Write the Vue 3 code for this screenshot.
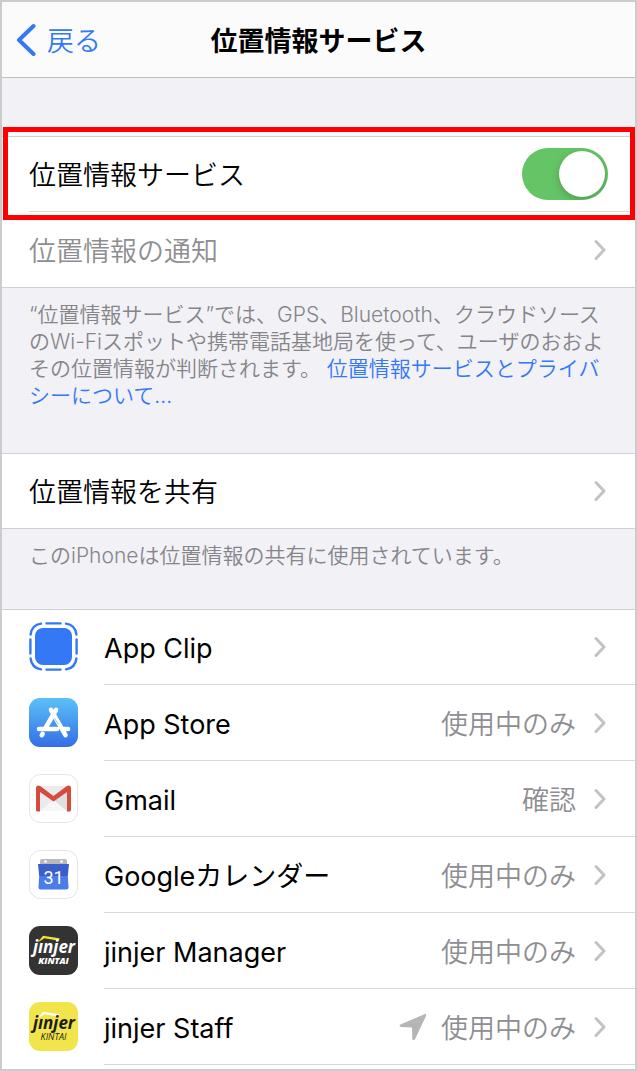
<template>
  <div class="screen">
    <header class="navbar">
      <button type="button" class="back">
        <svg class="back-icon" viewBox="0 0 20 34" aria-hidden="true">
          <path d="M17.5 3 L3 17 L17.5 31" />
        </svg>
        <span class="back-text">戻る</span>
      </button>
      <h1 class="title">位置情報サービス</h1>
    </header>

    <main class="content">
      <section class="group">
        <div class="row">
          <div class="row-body">
            <label class="label" for="location-switch">位置情報サービス</label>
            <input id="location-switch" v-model="enabled" class="switch" type="checkbox" role="switch">
          </div>
          <div class="highlight"></div>
        </div>
        <a class="row row-last" href="#alerts">
          <span class="row-body">
            <span class="label muted">位置情報の通知</span>
            <svg class="chevron" viewBox="0 0 12 22" aria-hidden="true"><path d="M2 2.5 L10 11 L2 19.5" /></svg>
          </span>
        </a>
      </section>
      <p class="note note-tall">
        “位置情報サービス”では、GPS、Bluetooth、クラウドソースのWi-Fiスポットや携帯電話基地局を使って、ユーザのおおよその位置情報が判断されます。
        <a href="#privacy">位置情報サービスとプライバシーについて...</a>
      </p>

      <section class="group">
        <a class="row row-last" href="#share">
          <span class="row-body">
            <span class="label">位置情報を共有</span>
            <svg class="chevron" viewBox="0 0 12 22" aria-hidden="true"><path d="M2 2.5 L10 11 L2 19.5" /></svg>
          </span>
        </a>
      </section>
      <p class="note">このiPhoneは位置情報の共有に使用されています。</p>

      <section class="group group-fill">
        <a v-for="app in apps" :key="app.id" class="row" :href="`#${app.id}`">
          <svg v-if="app.id === 'clip'" class="app-icon" viewBox="0 0 49 49" aria-hidden="true">
            <rect x="6" y="6" width="37" height="37" rx="8" fill="#3478f6" />
            <g fill="none" stroke="#3478f6" stroke-width="2.4" stroke-linecap="round">
              <path d="M17.5 1.4h14M17.5 47.6h14M1.4 17.5v14M47.6 17.5v14" />
              <path d="M1.6 12.5C2.4 6 6 2.4 12 1.6M37 1.6c6 .8 9.6 4.4 10.4 10.9M1.6 36.5C2.4 43 6 46.6 12 47.4M37 47.4c6-.8 9.6-4.4 10.4-10.9" />
            </g>
          </svg>

          <svg v-else-if="app.id === 'store'" class="app-icon" viewBox="0 0 49 49" aria-hidden="true">
            <defs>
              <linearGradient id="store-bg" x1="0" y1="0" x2="0" y2="1">
                <stop offset="0" stop-color="#5cc0f7" />
                <stop offset="1" stop-color="#336fe6" />
              </linearGradient>
            </defs>
            <rect width="49" height="49" rx="11" fill="url(#store-bg)" />
            <g fill="none" stroke="#fff" stroke-width="4.6" stroke-linecap="round">
              <path d="M27 11.8 L16.5 30M22 11.8 L36.5 37.2M10 31H28M34 31H39" />
              <path d="M13.6 35.8 L12.8 37.2" />
            </g>
            <path d="M25.5 20 L29 26" stroke="#8fc0f5" stroke-width=".8" />
          </svg>

          <svg v-else-if="app.id === 'gmail'" class="app-icon" viewBox="0 0 49 49" aria-hidden="true">
            <rect x=".5" y=".5" width="48" height="48" rx="11" fill="#fff" stroke="#e4e4e6" />
            <path d="M8 12h33v25H8z" fill="#ebebeb" />
            <path d="M11 37 L24.5 26 L38 37z" fill="#f7f7f7" />
            <path d="M24.5 26 L38 15V37z" fill="#dfdfe0" />
            <path d="M7 14C7 11.500 9.500 10.700 11.500 12.300L24.500 22 37.500 12.300C39.500 10.700 42 11.500 42 14V36Q42 37.500 40.500 37.500H38V18L24.500 27.500 11 18V37.500H8.500Q7 37.500 7 36z" fill="#d54b3d" />
          </svg>

          <svg v-else-if="app.id === 'calendar'" class="app-icon" viewBox="0 0 49 49" aria-hidden="true">
            <rect x=".5" y=".5" width="48" height="48" rx="11" fill="#fff" stroke="#e4e4e6" />
            <path d="M11 11Q11 9 13 9H36Q38 9 38 11V16H11z" fill="#b9b9ba" />
            <circle cx="16.5" cy="11.5" r="1.3" fill="#fff" />
            <circle cx="32.5" cy="11.5" r="1.3" fill="#fff" />
            <path d="M9 14H40L38.800 26H10.200z" fill="#3a5fcb" />
            <path d="M10.200 26H38.800L39.500 37.500Q39.500 39.500 37.500 39.500H11.500Q9.500 39.500 9.500 37.500z" fill="#4b7ce9" />
            <text x="24.5" y="34" text-anchor="middle" class="cal-day">31</text>
          </svg>

          <svg v-else class="app-icon" viewBox="0 0 49 49" aria-hidden="true">
            <rect width="49" height="49" rx="11" :fill="app.bg" />
            <path d="M8.500 16.500 L14 9.800 L30.500 12.200 L30 14.800 L15.500 12.200z" :fill="app.accent" />
            <text x="25" y="27" text-anchor="middle" class="logo-name" :fill="app.ink">jınjer</text>
            <text x="24.5" y="38" text-anchor="middle" class="logo-sub" :class="{ 'logo-sub-bold': app.bold }" :fill="app.ink">KINTAI</text>
          </svg>

          <span class="row-body">
            <span class="label app-name">{{ app.name }}</span>
            <svg v-if="app.recent" class="arrow" viewBox="0 0 28 28" aria-hidden="true">
              <path d="M25.5 1.2 L1.5 11.5C.2 12.2 .3 14 2 14.1L13 14.4 13.3 25.8C13.4 27.6 15.3 27.7 16 26.3L27 3C27.5 1.7 26.7 .7 25.5 1.2z" />
            </svg>
            <span v-if="app.status" class="status">{{ app.status }}</span>
            <svg class="chevron" viewBox="0 0 12 22" aria-hidden="true"><path d="M2 2.5 L10 11 L2 19.5" /></svg>
          </span>
        </a>
      </section>
    </main>
  </div>
</template>

<script setup>
import { ref } from 'vue'

const enabled = ref(true)

const apps = [
  { id: 'clip', name: 'App Clip' },
  { id: 'store', name: 'App Store', status: '使用中のみ' },
  { id: 'gmail', name: 'Gmail', status: '確認' },
  { id: 'calendar', name: 'Googleカレンダー', status: '使用中のみ' },
  { id: 'manager', name: 'jinjer Manager', status: '使用中のみ', bg: '#333333', ink: '#ffffff', accent: '#f3e12f', bold: true },
  { id: 'staff', name: 'jinjer Staff', status: '使用中のみ', recent: true, bg: '#f2e54b', ink: '#1c1c1a', accent: '#ffffff' }
]
</script>

<style>
body {
  margin: 0;
}
</style>

<style scoped>
.screen {
  display: flex;
  flex-direction: column;
  box-sizing: border-box;
  min-height: 100vh;
  border: 2px solid #cccccc;
  background: #f2f1f6;
  color: #000;
  font-family: Inter, "Noto Sans CJK JP", sans-serif;
  font-size: 27px;
  font-weight: 350;
  line-height: 36px;
}

a {
  color: inherit;
  text-decoration: none;
}

.navbar {
  display: grid;
  grid-template-columns: 1fr auto 1fr;
  align-items: center;
  height: 75px;
  border-bottom: 1px solid #bdbdc0;
  background: #fbfbfb;
}

.back {
  display: flex;
  align-items: center;
  gap: 11px;
  padding: 0 0 0 14px;
  border: none;
  background: none;
  color: #3478f6;
  font: inherit;
  cursor: pointer;
}

.back-icon {
  width: 20px;
  height: 34px;
  fill: none;
  stroke: currentColor;
  stroke-width: 4;
  stroke-linecap: round;
  stroke-linejoin: round;
}

.title {
  margin: 0;
  font-size: 27px;
  font-weight: 700;
}

.title,
.back-text {
  padding-top: 4px;
}

.content {
  display: flex;
  flex: 1;
  flex-direction: column;
  padding-top: 58px;
}

.group {
  background: #fff;
  box-shadow: inset 0 1px #d0d0d4;
}

.group-fill {
  flex: 1;
}

.row {
  position: relative;
  display: flex;
  align-items: center;
  height: 76px;
  padding-left: 27px;
}

.row-last {
  box-shadow: inset 0 -1px #d0d0d4;
}

.row-body {
  display: flex;
  flex: 1;
  align-items: center;
  box-sizing: border-box;
  height: 76px;
  padding-right: 27px;
  border-bottom: 1px solid #d8d8da;
}

.row-last .row-body {
  border-bottom-color: transparent;
}

.label {
  flex: 1;
}

.label,
.status {
  padding-top: 4px;
}

.app-name {
  font-weight: 400;
}

.muted,
.status {
  color: #8e8e92;
}

.status {
  margin-left: 14px;
}

.app-icon {
  width: 49px;
  height: 49px;
  margin: 0 26px 2px 0;
}

.chevron {
  width: 12px;
  height: 22px;
  margin: 0 2px 0 18px;
  fill: none;
  stroke: #c3c3c5;
  stroke-width: 3;
  stroke-linecap: round;
  stroke-linejoin: round;
}

.arrow {
  width: 28px;
  height: 28px;
  fill: #b5b5b8;
}

.switch {
  display: flex;
  align-items: center;
  width: 86px;
  height: 52px;
  margin: 0;
  padding: 0 3px;
  box-sizing: border-box;
  border-radius: 26px;
  background: #e9e9eb;
  appearance: none;
  cursor: pointer;
  overflow: hidden;
}

.switch::before {
  content: "";
  width: 46px;
  height: 46px;
  border-radius: 50%;
  background: #fff;
  box-shadow: 0 3px 8px rgba(0, 0, 0, 0.2);
}

.switch:checked {
  justify-content: flex-end;
  background: #65c466;
}

/* red frame drawn over the first row */
.highlight {
  position: absolute;
  inset: -9px 0 -8px 1px;
  border: 5px solid #ff0000;
  background: linear-gradient(#f9f9fc, #f9f9fc) top / 100% 4px no-repeat;
  pointer-events: none;
  z-index: 1;
}

.note {
  margin: 0;
  padding: 13px 28px 40px 27px;
  color: #85858a;
  font-size: 21px;
  line-height: 27px;
}

.note-tall {
  padding-bottom: 44px;
}

.note a {
  color: #3478f6;
}

.cal-day {
  fill: #fff;
  font: 18px Roboto, sans-serif;
}

.logo-name {
  font: italic 700 17px "Open Sans", sans-serif;
}

.logo-sub {
  font: italic 400 9px "Open Sans", sans-serif;
}

.logo-sub-bold {
  font-weight: 800;
}
</style>
